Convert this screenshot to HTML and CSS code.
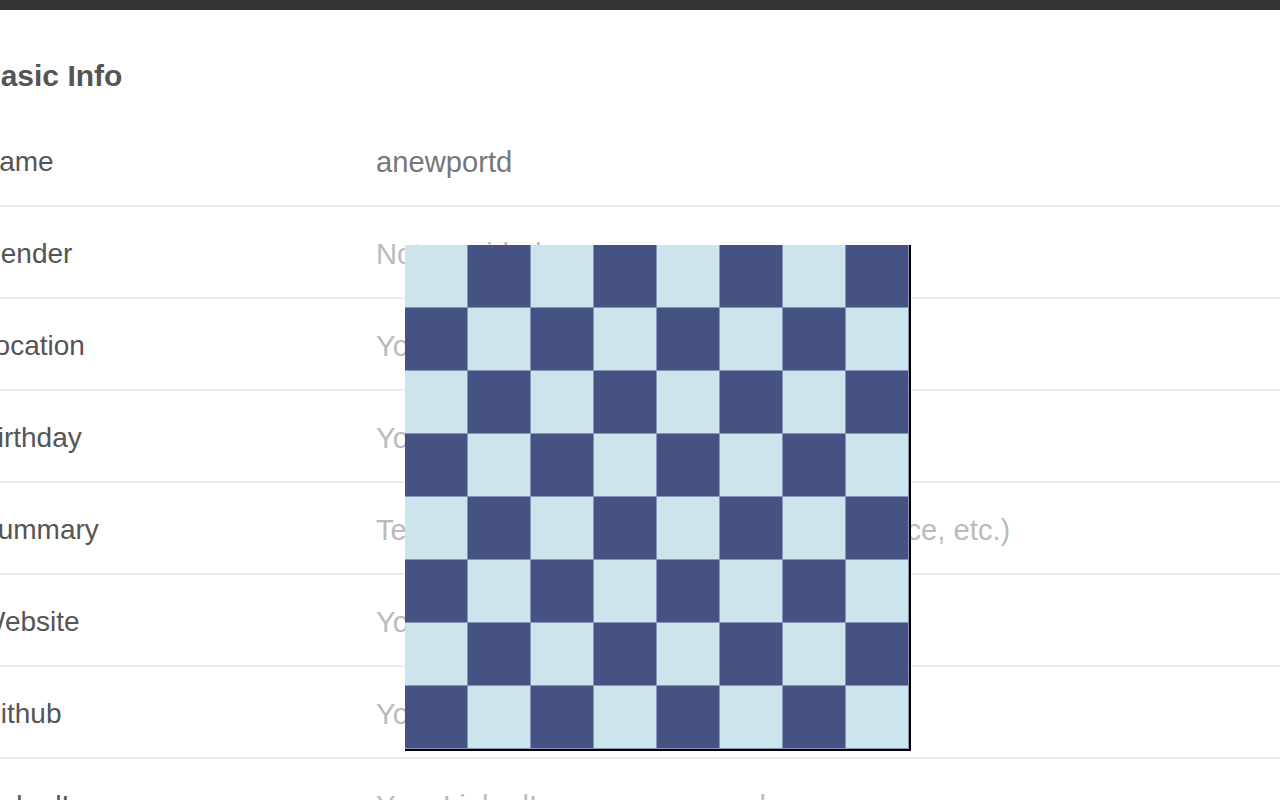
FILE: index.html
```html
<!DOCTYPE html>
<html lang="en">
<head>
<meta charset="utf-8">
<title>Basic Info</title>
<link rel="stylesheet" href="styles.css">
</head>
<body>
<div class="topbar"></div>
<main class="page">
  <h1 class="section-title">Basic Info</h1>
  <div class="rows">
    <div class="row"><div class="label">Name</div><div class="value">anewportd</div></div>
    <div class="row"><div class="label">Gender</div><div class="value placeholder">Not provided</div></div>
    <div class="row"><div class="label">Location</div><div class="value placeholder">Your location</div></div>
    <div class="row"><div class="label">Birthday</div><div class="value placeholder">Your birthday</div></div>
    <div class="row"><div class="label">Summary</div><div class="value placeholder">Tell us about yourself (interests, experience, etc.)</div></div>
    <div class="row"><div class="label">Website</div><div class="value placeholder">Your blog, portfolio, etc.</div></div>
    <div class="row"><div class="label">Github</div><div class="value placeholder">Your Github username or url</div></div>
    <div class="row"><div class="label">LinkedIn</div><div class="value placeholder">Your LinkedIn username or url</div></div>
  </div>
</main>
<div class="board">
  <div class="sq l"></div><div class="sq d"></div><div class="sq l"></div><div class="sq d"></div><div class="sq l"></div><div class="sq d"></div><div class="sq l"></div><div class="sq d"></div>
  <div class="sq d"></div><div class="sq l"></div><div class="sq d"></div><div class="sq l"></div><div class="sq d"></div><div class="sq l"></div><div class="sq d"></div><div class="sq l"></div>
  <div class="sq l"></div><div class="sq d"></div><div class="sq l"></div><div class="sq d"></div><div class="sq l"></div><div class="sq d"></div><div class="sq l"></div><div class="sq d"></div>
  <div class="sq d"></div><div class="sq l"></div><div class="sq d"></div><div class="sq l"></div><div class="sq d"></div><div class="sq l"></div><div class="sq d"></div><div class="sq l"></div>
  <div class="sq l"></div><div class="sq d"></div><div class="sq l"></div><div class="sq d"></div><div class="sq l"></div><div class="sq d"></div><div class="sq l"></div><div class="sq d"></div>
  <div class="sq d"></div><div class="sq l"></div><div class="sq d"></div><div class="sq l"></div><div class="sq d"></div><div class="sq l"></div><div class="sq d"></div><div class="sq l"></div>
  <div class="sq l"></div><div class="sq d"></div><div class="sq l"></div><div class="sq d"></div><div class="sq l"></div><div class="sq d"></div><div class="sq l"></div><div class="sq d"></div>
  <div class="sq d"></div><div class="sq l"></div><div class="sq d"></div><div class="sq l"></div><div class="sq d"></div><div class="sq l"></div><div class="sq d"></div><div class="sq l"></div>
</div>
</body>
</html>
```
FILE: styles.css
```css
html, body {
  margin: 0;
  padding: 0;
  background: #ffffff;
  overflow: hidden;
}
body {
  font-family: "Liberation Sans", Arial, Helvetica, sans-serif;
  width: 1280px;
  height: 800px;
  position: relative;
}
.topbar {
  height: 10px;
  background: #333333;
}
.page {
  margin-left: -21px;
}
.section-title {
  margin: 0;
  padding-top: 48px;
  height: 57px;
  font-size: 30px;
  line-height: 36px;
  font-weight: bold;
  color: #555555;
}
.row {
  display: flex;
  align-items: center;
  box-sizing: border-box;
  height: 92px;
  padding-top: 4px;
  border-bottom: 2px solid #ececec;
}
.label {
  width: 397px;
  flex: none;
  font-size: 28px;
  color: #555555;
}
.value {
  font-size: 29.2px;
  color: #777777;
}
.value.placeholder {
  color: #bbbbbb;
}
.board {
  position: absolute;
  left: 405px;
  top: 245px;
  display: grid;
  grid-template-columns: repeat(8, 62px);
  grid-template-rows: repeat(8, 62px);
  gap: 1px;
  padding: 0 1px 1px 0;
  background: #8497b9;
  border-right: 2px solid #000000;
  border-bottom: 2px solid #000000;
}
.sq.l { background: #cce4eb; }
.sq.d { background: #465283; }
```
